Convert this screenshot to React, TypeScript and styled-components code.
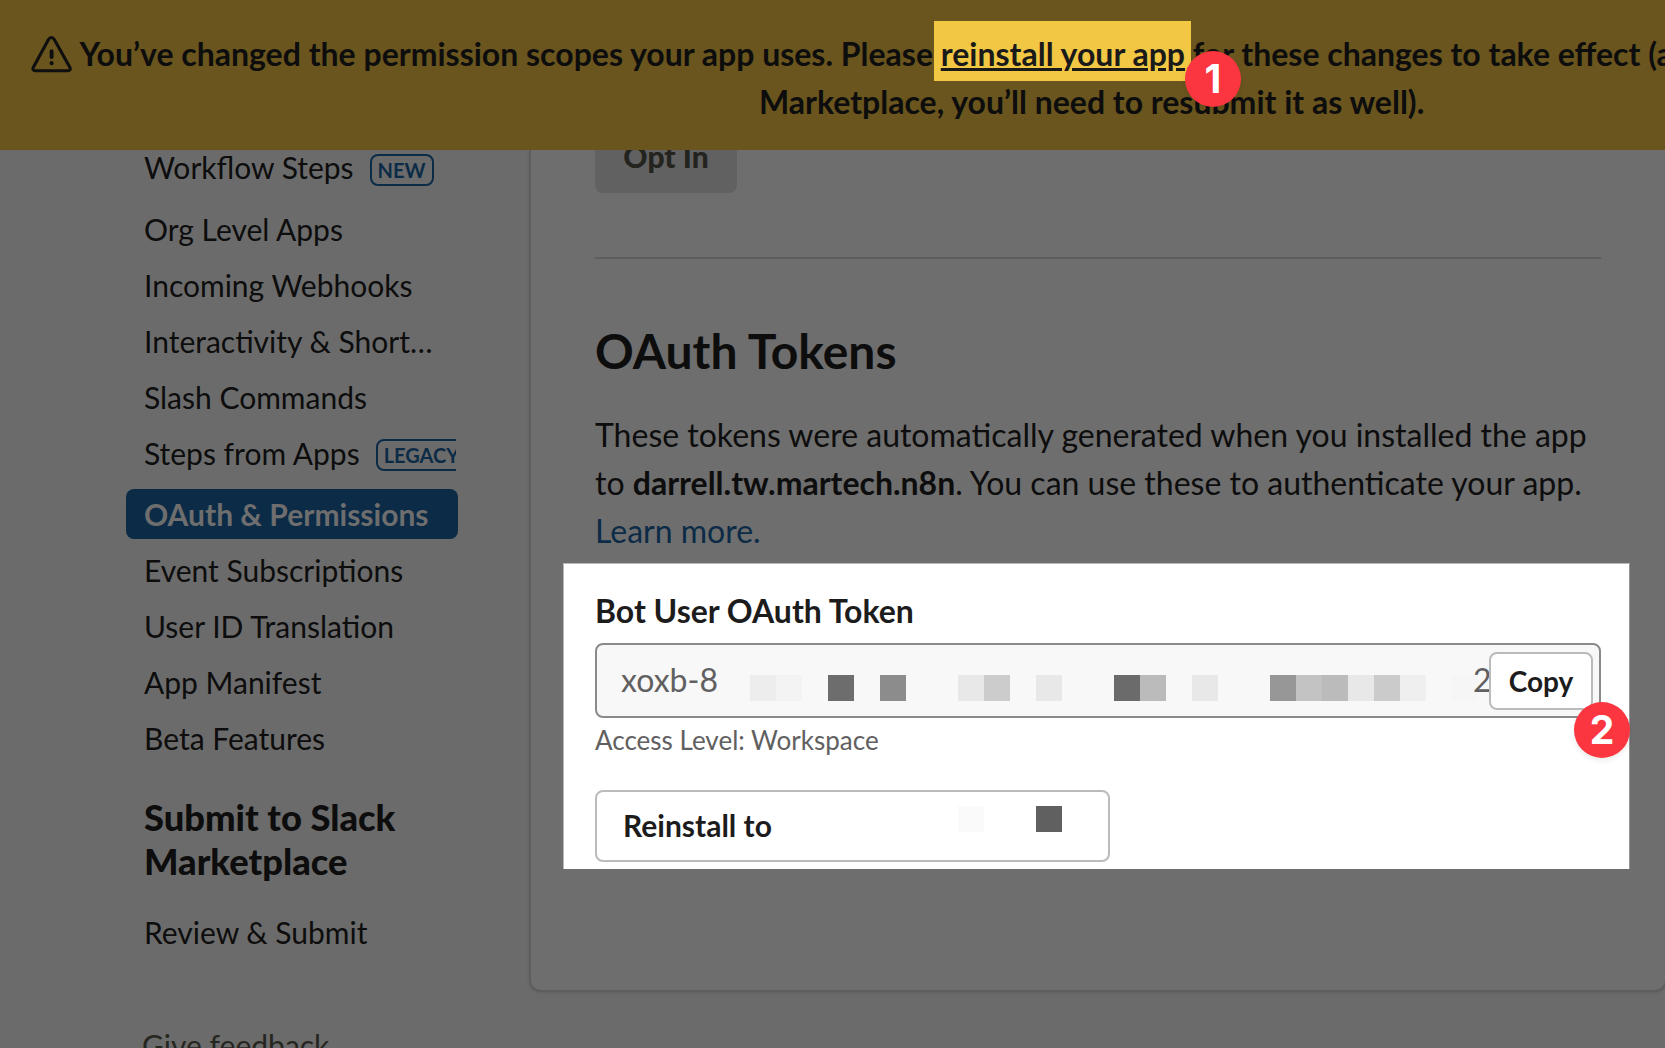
import React from "react";
import styled, { createGlobalStyle } from "styled-components";

const GlobalStyle = createGlobalStyle`
  *, *::before, *::after { box-sizing: border-box; }
  body {
    margin: 0;
    background: #6b6b6b;
    color: #0d0d0d;
    font-family: Lato, "Liberation Sans", sans-serif;
    overflow: hidden;
  }
`;

const Page = styled.div`
  width: 1665px;
  height: 1048px;
  overflow: hidden;
  display: flex;
  flex-direction: column;
  background: #6b6b6b;
`;

const Banner = styled.header`
  position: relative;
  flex: none;
  height: 150px;
  padding: 30px 0 0 31px;
  overflow: hidden;
  background: #69551d;
  font-size: 32px;
  font-weight: 700;
  line-height: 48px;
  white-space: nowrap;
`;

const BannerLine = styled.div<{ $indent?: number }>`
  display: flex;
  height: 48px;
  padding-left: ${(p) => p.$indent ?? 0}px;
`;

const WarningIcon = styled.svg`
  flex: none;
  width: 42px;
  height: 38px;
  margin: 5px 6.4px 0 0;
`;

const BannerText = styled.span`
  white-space: pre;
`;

const ReinstallLink = styled.a`
  height: 60px;
  margin: -9px -6px 0 -7px;
  padding: 9px 6px 0 7px;
  background: #f2c744;
  color: #1a1a1a;
  text-decoration: underline;
  text-decoration-thickness: 3px;
  text-underline-offset: 2px;
`;

const StepBadge = styled.span<{ $x: number; $y: number }>`
  position: absolute;
  left: ${(p) => p.$x}px;
  top: ${(p) => p.$y}px;
  width: 56px;
  height: 56px;
  padding-bottom: 2px;
  display: flex;
  align-items: center;
  justify-content: center;
  border-radius: 50%;
  background: #fb3640;
  box-shadow: 0 3px 5px rgba(0, 0, 0, 0.08);
  color: #fff;
  font: 700 39px/1 Inter, sans-serif;
`;

const Body = styled.div`
  flex: 1;
  min-height: 0;
  display: flex;
`;

const Sidebar = styled.nav`
  flex: none;
  width: 529px;
  padding-left: 126px;
  overflow: hidden;
`;

const NavList = styled.div`
  width: 332px;
  display: flex;
  flex-direction: column;
`;

const NavItem = styled.a<{ $gap?: number }>`
  height: 56px;
  margin-top: ${(p) => p.$gap ?? 0}px;
  margin-right: 2px;
  padding-left: 18px;
  display: flex;
  align-items: center;
  overflow: hidden;
  font-size: 30px;
  line-height: 56px;
  white-space: nowrap;
`;

const ActiveItem = styled(NavItem)`
  height: 50px;
  margin: 8px 0 3px;
  border-radius: 8px;
  background: #0c2b47;
  color: #6e6e6e;
  font-weight: 700;
  line-height: 50px;
`;

const Tag = styled.span<{ $drop: number }>`
  flex: none;
  height: 32px;
  margin: ${(p) => p.$drop}px 0 0 16px;
  padding: 0 6px;
  border: 2px solid #0c2b47;
  border-radius: 8px;
  color: #0c2b47;
  font-size: 20px;
  font-weight: 700;
  line-height: 29px;
`;

const NavHeading = styled.h3`
  width: 280px;
  margin: 29px 0 21px;
  padding-left: 18px;
  font-size: 36.3px;
  font-weight: 900;
  line-height: 44px;
`;

const Feedback = styled.a`
  margin-top: 57px;
  padding-left: 16px;
  color: #262620;
  font-size: 30px;
  line-height: 56px;
`;

const Card = styled.main`
  flex: none;
  width: 1138px;
  height: 842px;
  padding-left: 64px;
  display: flex;
  flex-direction: column;
  align-items: flex-start;
  border: 2px solid #5e5e5e;
  border-top: 0;
  border-radius: 0 0 12px 12px;
  background: #6e6e6e;
  box-shadow: 0 1px 3px rgba(0, 0, 0, 0.1);
`;

const OptInClip = styled.div`
  height: 43px;
  display: flex;
  align-items: flex-end;
  overflow: hidden;
`;

const OptIn = styled.button`
  flex: none;
  width: 142px;
  height: 72px;
  padding: 0 0 2px;
  border: 0;
  border-radius: 8px;
  background: #616161;
  color: #24241f;
  font: 900 30px/1.2 Lato, sans-serif;
`;

const Rule = styled.hr`
  width: 1006px;
  height: 2px;
  margin: 64px 0;
  border: 0;
  background: #5d5d5d;
`;

const Title = styled.h2`
  margin: 0 0 32px;
  font-size: 48px;
  font-weight: 700;
  line-height: 56px;
`;

const Intro = styled.p`
  width: 1006px;
  margin: 0 0 8px;
  font-size: 32px;
  line-height: 48px;
`;

const Link = styled.a`
  color: #0c2b47;
`;

const Spotlight = styled.section`
  width: 1067px;
  height: 306px;
  margin-left: -32px;
  padding: 23px 0 0 31px;
  border: solid #b8b8b8;
  border-width: 1px 1px 0 1px;
  border-right-color: #959595;
  background: #fff;
  color: #1d1c1d;
`;

const FieldLabel = styled.label`
  display: block;
  margin-bottom: 8px;
  font-size: 32px;
  font-weight: 700;
  line-height: 48px;
`;

const TokenField = styled.div`
  position: relative;
  width: 1006px;
  height: 75px;
  padding: 0 6px 0 24px;
  display: flex;
  align-items: center;
  border: 2px solid #8a8a8a;
  border-radius: 8px;
  background: #f8f8f8;
  color: #616061;
`;

const TokenStart = styled.span`
  flex: none;
  width: 129px;
  margin-top: -2px;
  font-size: 32px;
  line-height: 71px;
`;

const TokenEnd = styled.span`
  flex: 1;
  min-width: 0;
  margin-top: -2px;
  overflow: hidden;
  font-size: 32px;
  line-height: 71px;
`;

const Mosaic = styled.span`
  flex: none;
  width: 723px;
  margin-top: 15px;
  display: flex;
`;

const Cell = styled.i<{ $tone: string }>`
  flex: none;
  width: 26px;
  height: 26px;
  background: ${(p) => p.$tone};
`;

const CopyButton = styled.button`
  flex: none;
  width: 104px;
  height: 58px;
  margin-top: 1px;
  padding: 2px 0 0;
  border: 2px solid #bbb;
  border-radius: 8px;
  background: #fff;
  color: #1d1c1d;
  font: 700 28px/1.2 Lato, sans-serif;
`;

const Hint = styled.div`
  margin: 2px 0 30px;
  color: #616061;
  font-size: 26px;
  line-height: 40px;
`;

const ReinstallButton = styled.button`
  width: 515px;
  height: 72px;
  padding: 0 46px 2px 26px;
  display: flex;
  align-items: center;
  justify-content: space-between;
  border: 2px solid #bbb;
  border-radius: 8px;
  background: #fff;
  color: #1d1c1d;
  font: 700 30px/1.2 Lato, sans-serif;
`;

const WorkspaceMask = styled.span`
  width: 104px;
  margin-top: -13px;
  display: flex;
  justify-content: space-between;
`;

const clear = "transparent";
const tokenTones = [
  "#ededed", "#f3f3f3", clear, "#6d6d6d", clear, "#8c8c8c", clear, clear,
  "#e8e8e8", "#cccccc", clear, "#e8e8e8", clear, clear, "#6b6b6b", "#bbbbbb",
  clear, "#e8e8e8", clear, clear, "#979797", "#c3c3c3", "#bbbbbb", "#e8e8e8",
  "#cbcbcb", "#efefef", clear, "#f6f6f6",
];

export default function App() {
  return (
    <Page>
      <GlobalStyle />
      <Banner>
        <BannerLine>
          <WarningIcon viewBox="0 0 42 38" fill="none" stroke="#0f0f0f" strokeLinecap="round" strokeLinejoin="round">
            <path
              d="M17.5 4.4 2.4 32.2C1.3 34.3 2.3 35.7 4.3 35.7H36.9C38.9 35.7 39.9 34.3 38.8 32.2L23.3 4.4C21.8 1.8 19 1.8 17.5 4.4Z"
              strokeWidth="3.1"
            />
            <path d="M20.6 16.3V22" strokeWidth="3.9" />
            <path d="M20.6 28.1V28.2" strokeWidth="4" />
          </WarningIcon>
          <BannerText>{"You’ve changed the permission scopes your app uses. Please "}</BannerText>
          <ReinstallLink>reinstall your app</ReinstallLink>
          <BannerText>{" for these changes to take effect (a"}</BannerText>
        </BannerLine>
        <BannerLine $indent={728}>Marketplace, you’ll need to resubmit it as well).</BannerLine>
        <StepBadge $x={1185} $y={51}>1</StepBadge>
      </Banner>

      <Body>
        <Sidebar>
          <NavList>
            <NavItem $gap={-11}>
              Workflow Steps<Tag $drop={6}>NEW</Tag>
            </NavItem>
            <NavItem $gap={6}>Org Level Apps</NavItem>
            <NavItem>Incoming Webhooks</NavItem>
            <NavItem>Interactivity &amp; Short…</NavItem>
            <NavItem>Slash Commands</NavItem>
            <NavItem>
              Steps from Apps<Tag $drop={4}>LEGACY</Tag>
            </NavItem>
            <ActiveItem>OAuth &amp; Permissions</ActiveItem>
            <NavItem>Event Subscriptions</NavItem>
            <NavItem>User ID Translation</NavItem>
            <NavItem>App Manifest</NavItem>
            <NavItem>Beta Features</NavItem>
            <NavHeading>Submit to Slack Marketplace</NavHeading>
            <NavItem>Review &amp; Submit</NavItem>
            <Feedback>Give feedback</Feedback>
          </NavList>
        </Sidebar>

        <Card>
          <OptInClip>
            <OptIn>Opt In</OptIn>
          </OptInClip>
          <Rule />
          <Title>OAuth Tokens</Title>
          <Intro>
            These tokens were automatically generated when you installed the app to{" "}
            <b>darrell.tw.martech.n8n</b>. You can use these to authenticate your app.{" "}
            <Link>Learn more.</Link>
          </Intro>
          <Spotlight>
            <FieldLabel>Bot User OAuth Token</FieldLabel>
            <TokenField>
              <TokenStart>xoxb-8</TokenStart>
              <Mosaic>
                {tokenTones.map((tone, i) => (
                  <Cell key={i} $tone={tone} />
                ))}
              </Mosaic>
              <TokenEnd>2</TokenEnd>
              <CopyButton>Copy</CopyButton>
              <StepBadge $x={977} $y={57}>2</StepBadge>
            </TokenField>
            <Hint>Access Level: Workspace</Hint>
            <ReinstallButton>
              Reinstall to
              <WorkspaceMask>
                <Cell $tone="#fafafa" />
                <Cell $tone="#606060" />
              </WorkspaceMask>
            </ReinstallButton>
          </Spotlight>
        </Card>
      </Body>
    </Page>
  );
}
